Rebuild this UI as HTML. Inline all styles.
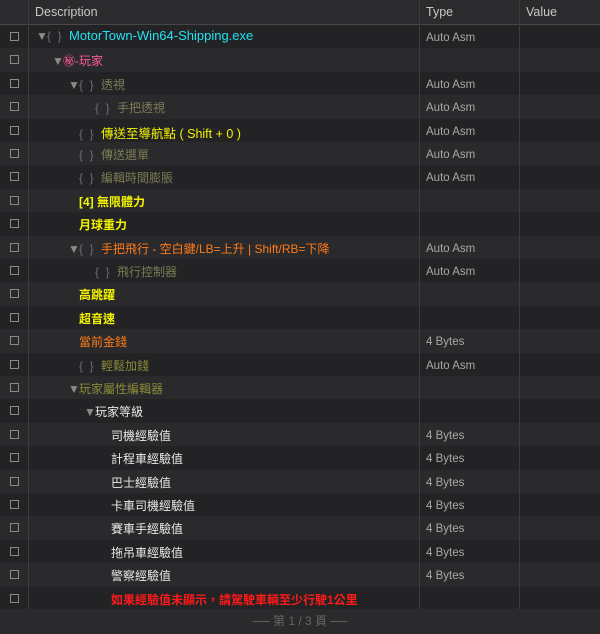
<!DOCTYPE html>
<html><head><meta charset="utf-8"><style>
*{margin:0;padding:0;box-sizing:border-box}
body{width:600px;height:634px;background:#2a2a2c;font-family:"Liberation Sans","Noto Sans CJK TC",sans-serif;font-size:12px;color:#ddd;overflow:hidden;position:relative}
.hdr{position:absolute;top:0;left:0;width:600px;height:25px;background:#2b2b2d;border-bottom:1px solid #474747}
.hdr span{position:absolute;top:5px;color:#c8c8c8;font-size:12.5px}
.row{position:absolute;left:0;width:600px;height:23.4px}
.row:nth-child(odd){background:#232325}
.row:nth-child(even){background:#2a2a2c}
.cb{position:absolute;left:10px;top:7px;width:9px;height:9px;border:1px solid #8a8a8a}
.d{position:absolute;top:4px;white-space:nowrap;font-size:12px}
.t{position:absolute;left:426px;top:7px;color:#a8a8a8;font-size:11.5px}
.vl{position:absolute;top:0;width:1px;height:609px;background:#3c3c3e}
.ar{color:#8a8a8a;font-size:12px;display:inline-block;width:11px}
.br{color:#6a6e78;display:inline-block;width:22px}
.g{color:#7b7b55}
.y{color:#f4f400;font-weight:bold}
.o{color:#ff7a18}
.c{color:#22e2f2;font-size:13px}
.p{color:#ff5a9a}
.w{color:#e8e8e8}
.r{color:#ff1a1a;font-weight:bold}
.ft{position:absolute;top:609px;left:0;width:600px;height:25px;background:#2a2a2c;color:#666;text-align:center;font-size:12px;line-height:24px}
</style></head><body>
<div class="hdr"><span style="left:35px">Description</span><span style="left:426px">Type</span><span style="left:526px">Value</span></div>
<div id="rows" style="position:absolute;top:25px;left:0">
<div class="row" style="top:0"><div class="cb"></div><div class="d" style="left:36px;top:3px"><span class="ar">▼</span><span class="br">{&nbsp;&nbsp;}</span><span class="c">MotorTown-Win64-Shipping.exe</span></div><div class="t">Auto Asm</div></div>
<div class="row" style="top:23.4px"><div class="cb"></div><div class="d" style="left:52px"><span class="ar">▼</span><span class="p">㊙-玩家</span></div></div>
<div class="row" style="top:46.8px"><div class="cb"></div><div class="d" style="left:68px"><span class="ar">▼</span><span class="br">{&nbsp;&nbsp;}</span><span class="g">透視</span></div><div class="t">Auto Asm</div></div>
<div class="row" style="top:70.2px"><div class="cb"></div><div class="d" style="left:95px"><span class="br">{&nbsp;&nbsp;}</span><span class="g">手把透視</span></div><div class="t">Auto Asm</div></div>
<div class="row" style="top:93.6px"><div class="cb"></div><div class="d" style="left:79px"><span class="br">{&nbsp;&nbsp;}</span><span class="y" style="font-weight:normal;font-size:12.5px">傳送至導航點 ( Shift + 0 )</span></div><div class="t">Auto Asm</div></div>
<div class="row" style="top:117px"><div class="cb"></div><div class="d" style="left:79px"><span class="br">{&nbsp;&nbsp;}</span><span class="g">傳送選單</span></div><div class="t">Auto Asm</div></div>
<div class="row" style="top:140.4px"><div class="cb"></div><div class="d" style="left:79px"><span class="br">{&nbsp;&nbsp;}</span><span class="g">編輯時間膨脹</span></div><div class="t">Auto Asm</div></div>
<div class="row" style="top:163.8px"><div class="cb"></div><div class="d y" style="left:79px">[4] 無限體力</div></div>
<div class="row" style="top:187.2px"><div class="cb"></div><div class="d y" style="left:79px">月球重力</div></div>
<div class="row" style="top:210.6px"><div class="cb"></div><div class="d" style="left:68px"><span class="ar">▼</span><span class="br">{&nbsp;&nbsp;}</span><span class="o">手把飛行 - 空白鍵/LB=上升 | Shift/RB=下降</span></div><div class="t">Auto Asm</div></div>
<div class="row" style="top:234px"><div class="cb"></div><div class="d" style="left:95px"><span class="br">{&nbsp;&nbsp;}</span><span class="g">飛行控制器</span></div><div class="t">Auto Asm</div></div>
<div class="row" style="top:257.4px"><div class="cb"></div><div class="d y" style="left:79px">高跳躍</div></div>
<div class="row" style="top:280.8px"><div class="cb"></div><div class="d y" style="left:79px">超音速</div></div>
<div class="row" style="top:304.2px"><div class="cb"></div><div class="d o" style="left:79px">當前金錢</div><div class="t">4 Bytes</div></div>
<div class="row" style="top:327.6px"><div class="cb"></div><div class="d" style="left:79px"><span class="br">{&nbsp;&nbsp;}</span><span class="g" style="color:#8a8a3a">輕鬆加錢</span></div><div class="t">Auto Asm</div></div>
<div class="row" style="top:351px"><div class="cb"></div><div class="d" style="left:68px"><span class="ar">▼</span><span class="g" style="color:#8a8a3a">玩家屬性編輯器</span></div></div>
<div class="row" style="top:374.4px"><div class="cb"></div><div class="d" style="left:84px"><span class="ar">▼</span><span class="w">玩家等級</span></div></div>
<div class="row" style="top:397.8px"><div class="cb"></div><div class="d w" style="left:111px">司機經驗值</div><div class="t">4 Bytes</div></div>
<div class="row" style="top:421.2px"><div class="cb"></div><div class="d w" style="left:111px">計程車經驗值</div><div class="t">4 Bytes</div></div>
<div class="row" style="top:444.6px"><div class="cb"></div><div class="d w" style="left:111px">巴士經驗值</div><div class="t">4 Bytes</div></div>
<div class="row" style="top:468px"><div class="cb"></div><div class="d w" style="left:111px">卡車司機經驗值</div><div class="t">4 Bytes</div></div>
<div class="row" style="top:491.4px"><div class="cb"></div><div class="d w" style="left:111px">賽車手經驗值</div><div class="t">4 Bytes</div></div>
<div class="row" style="top:514.8px"><div class="cb"></div><div class="d w" style="left:111px">拖吊車經驗值</div><div class="t">4 Bytes</div></div>
<div class="row" style="top:538.2px"><div class="cb"></div><div class="d w" style="left:111px">警察經驗值</div><div class="t">4 Bytes</div></div>
<div class="row" style="top:561.6px;height:22.4px"><div class="cb"></div><div class="d r" style="left:111px">如果經驗值未顯示，請駕駛車輛至少行駛1公里</div></div>
</div>
<div class="vl" style="left:28px"></div>
<div class="vl" style="left:419px"></div>
<div class="vl" style="left:519px"></div>
<div class="ft">── 第 1 / 3 頁 ──</div>
</body></html>
